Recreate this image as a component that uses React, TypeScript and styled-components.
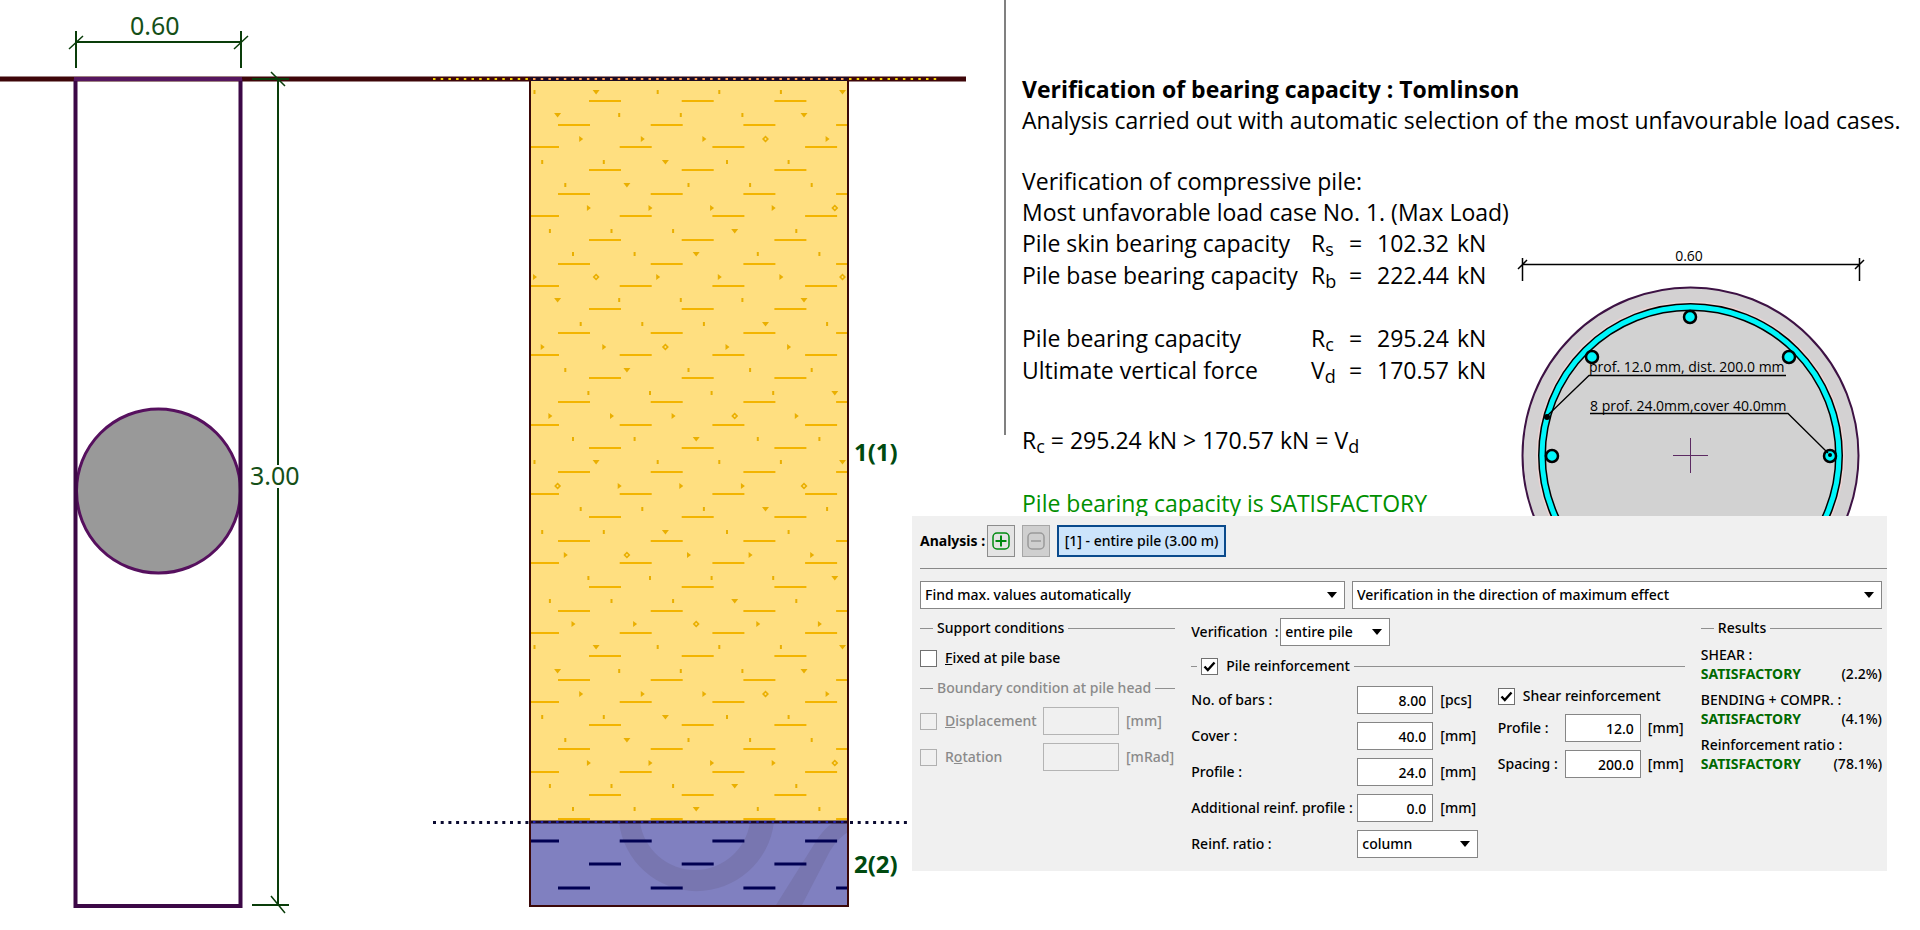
import React from "react";
import styled, { createGlobalStyle } from "styled-components";

const GlobalStyle = createGlobalStyle`
  *, *::before, *::after { box-sizing: border-box; }
  body { margin: 0; background: #fff; color: #000; font-family: "Open Sans", "Noto Sans", sans-serif; }
  h1, p { margin: 0; }
`;

const Page = styled.main`
  display: grid;
  grid-template-columns: 912fr 92fr 883fr 33fr;
  grid-template-rows: 516px auto;
  align-items: start;
`;

const ProfileDrawing = styled.svg`
  grid-column: 1 / 3;
  grid-row: 1 / 3;
  display: block;
  width: 100%;
  height: auto;
`;

/* ---------- Calculation report ---------- */

const Report = styled.section`
  grid-column: 3 / 5;
  grid-row: 1;
  height: 100%;
  display: flex;
  flex-direction: column;
  font-size: 23px;
  line-height: 31px;
  white-space: nowrap;
`;

const ReportIntro = styled.header`
  padding: 74px 0 0 16px;
  border-left: 2px solid #808080;
`;

const ReportTitle = styled.h1`
  font-size: 23px;
  font-weight: 700;
  line-height: 31px;
`;

const ReportBody = styled.div`
  display: flex;
  align-items: flex-start;
`;

const ReportDetails = styled.div`
  flex: 0 0 511px;
`;

const RuledBlock = styled.div`
  height: 299px;
  padding: 30px 0 0 16px;
  border-left: 2px solid #808080;
`;

const ValueTable = styled.table`
  border-collapse: collapse;
  table-layout: fixed;
  width: 490px;
  td { padding: 0; height: 32px; line-height: 31px; vertical-align: top; }
  tr.spaced td { height: 63px; padding-top: 31px; }
  sub { line-height: 0; font-size: 18px; vertical-align: -4px; }
`;

const Formula = styled.p`
  padding: 0 0 34px 18px;
  margin-top: -10px;
  sub { line-height: 0; font-size: 18px; vertical-align: -4px; }
`;

const Verdict = styled.p`
  padding-left: 18px;
  line-height: 26px;
  color: #008f00;
`;

const SectionDrawing = styled.svg`
  flex: none;
  margin-top: 104px;
`;

/* ---------- Analysis panel ---------- */

const Panel = styled.form`
  grid-column: 2 / 4;
  grid-row: 2;
  height: 355px;
  z-index: 1;
  background: #f0f0f0;
  padding: 9px 5px 0 8px;
  font-family: "Noto Sans", "Open Sans", sans-serif;
  font-size: 14px;
  line-height: 20px;
  font-weight: 500;
  white-space: nowrap;
`;

const Toolbar = styled.div`
  display: flex;
  align-items: center;
  gap: 7px;
  height: 32px;
`;

const ToolbarTitle = styled.strong`
  width: 60px;
  font-weight: 700;
`;

const IconButton = styled.button`
  width: 28px;
  height: 32px;
  padding: 0;
  display: grid;
  place-items: center;
  border: 1px solid #8c8c8c;
  background: #e4e4e4;
  color: #008a10;
  &:disabled { background: #cfcfcf; border-color: #a6a6a6; color: #9a9a9a; }
`;

const StageButton = styled.button`
  height: 32px;
  width: 169px;
  padding: 0;
  border: 2px solid #0a4a8c;
  background: #cce4fb;
  color: #000;
  font: inherit;
`;

const Divider = styled.hr`
  margin: 11px -5px 12px 0;
  border: 0;
  height: 1px;
  background: #888;
`;

const ModeRow = styled.div`
  display: grid;
  grid-template-columns: 425fr 530fr;
  gap: 7px;
`;

const Columns = styled.div`
  display: grid;
  grid-template-columns: 255fr 493fr 181fr;
  gap: 16px;
  padding-top: 9px;
`;

const Group = styled.div<{ $muted?: boolean }>`
  color: ${(p) => (p.$muted ? "#8a8a8a" : "#000")};
`;

const GroupTitle = styled.div<{ $lead?: number }>`
  display: flex;
  align-items: center;
  height: 20px;
  gap: 4px;
  &::before { content: ""; width: ${(p) => p.$lead ?? 13}px; height: 1px; background: #909090; }
  &::after { content: ""; flex: 1; height: 1px; background: #909090; }
`;

const FieldRows = styled.div`
  display: grid;
  gap: 8px;
`;

const FieldRow = styled.div<{ $label: number }>`
  display: grid;
  grid-template-columns: ${(p) => p.$label}px 76px auto;
  align-items: center;
  height: 28px;
  > span { padding-left: 7px; }
`;

const WideCell = styled.div`
  grid-column: 2 / 4;
`;

const CheckLabel = styled.label`
  display: flex;
  align-items: center;
  gap: 8px;
`;

const TickFrame = styled.span`
  position: relative;
  display: block;
  width: 17px;
  height: 17px;
  svg { position: absolute; inset: 0; pointer-events: none; display: none; }
  input:checked + svg { display: block; }
`;

const TickInput = styled.input`
  appearance: none;
  display: block;
  width: 17px;
  height: 17px;
  margin: 0;
  border: 1px solid #707070;
  background: #fff;
  &:disabled { border-color: #b0b0b0; background: #f0f0f0; }
`;

const NumberInput = styled.input`
  width: 76px;
  height: 28px;
  padding: 0 6px;
  border: 1px solid #868686;
  border-radius: 0;
  background: #fff;
  color: #000;
  font: inherit;
  text-align: right;
  &:disabled { border-color: #b4b4b4; background: #f0f0f0; }
`;

const SelectFrame = styled.span<{ $width?: number }>`
  position: relative;
  display: block;
  width: ${(p) => (p.$width ? `${p.$width}px` : "auto")};
  svg { position: absolute; right: 8px; top: 11px; pointer-events: none; }
`;

const SelectBox = styled.select`
  appearance: none;
  display: block;
  width: 100%;
  height: 28px;
  padding: 0 24px 0 4px;
  border: 1px solid #868686;
  border-radius: 0;
  background: #fff;
  color: #000;
  font: inherit;
`;

const Inline = styled.div`
  display: flex;
  align-items: center;
  height: 28px;
  label { width: 89px; }
`;

const Reinforcement = styled.div`
  display: flex;
  justify-content: space-between;
  padding-top: 10px;
`;

const ShearFields = styled.div`
  width: 187px;
  display: grid;
  align-content: start;
  gap: 8px;
`;

const Spacer = styled.div<{ $size: number }>`
  height: ${(p) => p.$size}px;
`;

const Result = styled.div`
  line-height: 19px;
  margin-bottom: 7px;
  div { display: flex; justify-content: space-between; }
  strong { color: #006a00; font-weight: 700; }
`;

function Tick(props: React.InputHTMLAttributes<HTMLInputElement>) {
  return (
    <TickFrame>
      <TickInput type="checkbox" {...props} />
      <svg width="17" height="17" viewBox="0 0 17 17">
        <path d="M3.5 8.5 L6.8 12 L13.5 4.5" fill="none" stroke="#000" strokeWidth="2.4" />
      </svg>
    </TickFrame>
  );
}

function Select({ id, label, value, width }: { id: string; label?: string; value: string; width?: number }) {
  return (
    <SelectFrame $width={width}>
      <SelectBox id={id} aria-label={label} defaultValue={value}>
        <option>{value}</option>
      </SelectBox>
      <svg width="10" height="6" viewBox="0 0 10 6">
        <path d="M0 0 H10 L5 6 Z" fill="#000" />
      </svg>
    </SelectFrame>
  );
}

function NumberField({ id, label, value, unit, labelWidth }: { id: string; label: string; value: string; unit: string; labelWidth: number }) {
  return (
    <FieldRow $label={labelWidth}>
      <label htmlFor={id}>{label}</label>
      <NumberInput id={id} defaultValue={value} />
      <span>{unit}</span>
    </FieldRow>
  );
}

/* ---------- Soil hatching ---------- */

const COLUMN = { left: 530, right: 848, top: 80, boundary: 822, bottom: 906 };
const ROW = 23.13;
const DASH_START = [589, 558, 527];
const ACCENTS = [[597, 843], [559, 805], [766], [667], [628], [836], [736], [697]];

function dashPath(from: number, to: number) {
  let d = "";
  for (let i = from; i < to; i++) {
    const y = Math.round(100.8 + ROW * i + (i % 3 === 1 ? 1 : 0));
    for (let k = -1; k < 4; k++) {
      const x0 = Math.max(DASH_START[i % 3] + k * 92.7, COLUMN.left + 1);
      const x1 = Math.min(DASH_START[i % 3] + k * 92.7 + 32, COLUMN.right - 1);
      if (x1 > x0) d += `M${x0} ${y}H${x1}`;
    }
  }
  return d;
}

function grainPath() {
  let d = "";
  for (let i = 0; i < 32; i++) {
    const y = Math.round(92.3 + ROW * i);
    const phase = (534.5 + 23.1 * i - 531) % 61.6;
    for (let x = 531 + phase; x < 846; x += 61.6) {
      const accent = ACCENTS[i % 8].some((a) => Math.abs(a - x) < 8);
      if (i % 3 === 2) {
        d += accent
          ? `M${x - 3.5} ${y}l3.5 -3.5l3.5 3.500l-3.5 3.500zM${x - 1.3} ${y}l1.3 1.300l1.3 -1.300l-1.3 -1.300z`
          : `M${x - 1.5} ${y - 3}v6l4 -3z`;
      } else {
        d += accent ? `M${x - 3.5} ${y - 2}h7l-3.5 4.500z` : `M${x - 1} ${y - 2}h2v4h-2z`;
      }
    }
  }
  return d;
}

function PileProfile() {
  return (
    <ProfileDrawing viewBox="0 0 1004 930" fontFamily='"Noto Sans", sans-serif' role="img" aria-label="Pile and soil profile">
      <path d="M0 79H966" stroke="#3e0609" strokeWidth="5" />

      {/* soil layers */}
      <rect x={COLUMN.left} y={COLUMN.top} width={318} height={742} fill="#ffdf80" />
      <rect x={COLUMN.left} y={COLUMN.boundary} width={318} height={84} fill="#8080c0" />
      <g fill="#7876b0">
        <path d="M619 822A78 78 0 0 0 774 822H750A55.500 55.500 0 0 1 640 822Z" />
        <path d="M776 905L818 838Q826 827 834 822H848V832Q838 838 830 851L802 905Z" />
      </g>
      <path d={dashPath(0, 32)} stroke="#f3b400" strokeWidth="2" />
      <path d={grainPath()} fill="#eaaf00" fillRule="evenodd" />
      <path d={dashPath(32, 35)} stroke="#000052" strokeWidth="3" />
      <path d="M530 79H848" stroke="#1c0a24" strokeWidth="4" />
      <path d="M530 822H848" stroke="#180828" strokeWidth="3" />
      <path d="M530 79V906H848V79" fill="none" stroke="#3a0808" strokeWidth="2" />
      <path d="M433 79H530M849 79H937" stroke="#f5d400" strokeWidth="2" strokeDasharray="2.500 5.200" />
      <path d="M533 79H848" stroke="#ff9c50" strokeWidth="2" strokeDasharray="2.500 5.200" />
      <path d="M433 822.500H530M850 822.500H910" stroke="#0a0a30" strokeWidth="3" strokeDasharray="3 4.700" />
      <path d="M533 822H848" stroke="#2020b0" strokeWidth="2" strokeDasharray="2.500 5.200" />

      {/* pile */}
      <circle cx="158.500" cy="491" r="82" fill="#999" stroke="#56105e" strokeWidth="3" />
      <path d="M75.500 79V906H240.500V79" fill="none" stroke="#3c0846" strokeWidth="4" />
      <path d="M74 79H242" stroke="#56165e" strokeWidth="4" />

      {/* dimensions */}
      <g stroke="#0a3d0a" strokeWidth="2" fill="none">
        <path d="M76 31V68M241 31V68M76 42H241M278 79V465M278 488V906M252 79H289M252 905H289" />
        <path d="M69 49L83 36M234 49L248 36M271 72L285 86M271 896L285 913" strokeWidth="1.500" />
      </g>
      <g fill="#155018" fontSize="25">
        <text x="130" y="35">0.60</text>
        <text x="250" y="485">3.00</text>
      </g>
      <g fill="#004a10" fontSize="24" fontWeight="700">
        <text x="854" y="461">1(1)</text>
        <text x="854" y="873">2(2)</text>
      </g>
    </ProfileDrawing>
  );
}

function PileSection() {
  const bars = [[175, 77], [77, 117], [274, 117], [37, 216], [315, 216]];
  return (
    <SectionDrawing width="356" height="276" viewBox="0 0 356 276" role="img" aria-label="Pile cross-section">
      <circle cx="175.500" cy="215.500" r="168" fill="#d3d1d2" stroke="#3d1244" strokeWidth="2" />
      <circle cx="175.500" cy="215.500" r="148.500" fill="none" stroke="#efd3d3" strokeWidth="11" />
      <circle cx="175.500" cy="215.500" r="148.500" fill="#d2d2d2" stroke="#000" strokeWidth="8" />
      <circle cx="175.500" cy="215.500" r="148.500" fill="none" stroke="#00f6fa" strokeWidth="5" />
      {bars.map(([x, y]) => (
        <circle key={`${x}-${y}`} cx={x} cy={y} r="6" fill="#00f6fa" stroke="#000" strokeWidth="2.500" />
      ))}
      <g stroke="#000" fill="none">
        <path d="M8 24.500H345M7.500 18V41M344.500 18V41M3 29L12 20M340 29L349 20" strokeWidth="1.500" />
        <path d="M271 135.500H74L33 175M75 173.500H273L313 213" strokeWidth="1.300" />
      </g>
      <circle cx="32" cy="177" r="3" />
      <circle cx="315" cy="215" r="2" />
      <path d="M158 215.500H193M175.500 198V233" stroke="#5c2a62" />
      <g fontSize="14">
        <text x="174" y="21" textAnchor="middle">0.60</text>
        <text x="74" y="132">prof. 12.0 mm, dist. 200.0 mm</text>
        <text x="75" y="171">8 prof. 24.0mm,cover 40.0mm</text>
      </g>
    </SectionDrawing>
  );
}

const capacities = [
  { name: "Pile skin bearing capacity", symbol: "R", index: "s", value: "102.32" },
  { name: "Pile base bearing capacity", symbol: "R", index: "b", value: "222.44" },
  { name: "Pile bearing capacity", symbol: "R", index: "c", value: "295.24", spaced: true },
  { name: "Ultimate vertical force", symbol: "V", index: "d", value: "170.57" },
];

const results = [
  { name: "SHEAR :", use: "(2.2%)" },
  { name: "BENDING + COMPR. :", use: "(4.1%)" },
  { name: "Reinforcement ratio :", use: "(78.1%)" },
];

export default function App() {
  return (
    <>
      <GlobalStyle />
      <Page>
        <PileProfile />

        <Report>
          <ReportIntro>
            <ReportTitle>Verification of bearing capacity : Tomlinson</ReportTitle>
            <p>Analysis carried out with automatic selection of the most unfavourable load cases.</p>
          </ReportIntro>
          <ReportBody>
            <ReportDetails>
              <RuledBlock>
                <p>Verification of compressive pile:</p>
                <p>Most unfavorable load case No. 1. (Max Load)</p>
                <ValueTable>
                  <colgroup>
                    <col width="289" />
                    <col width="38" />
                    <col width="28" />
                    <col width="80" />
                    <col />
                  </colgroup>
                  <tbody>
                    {capacities.map((c) => (
                      <tr key={c.name} className={c.spaced ? "spaced" : undefined}>
                        <td>{c.name}</td>
                        <td>{c.symbol}<sub>{c.index}</sub></td>
                        <td>=</td>
                        <td>{c.value}</td>
                        <td>kN</td>
                      </tr>
                    ))}
                  </tbody>
                </ValueTable>
              </RuledBlock>
              <Formula>R<sub>c</sub> = 295.24 kN &gt; 170.57 kN = V<sub>d</sub></Formula>
              <Verdict>Pile bearing capacity is SATISFACTORY</Verdict>
            </ReportDetails>
            <PileSection />
          </ReportBody>
        </Report>

        <Panel>
          <Toolbar>
            <ToolbarTitle>Analysis :</ToolbarTitle>
            <IconButton type="button" aria-label="Add analysis">
              <svg width="18" height="18" viewBox="0 0 18 18" fill="none" stroke="currentColor" strokeWidth="1.500">
                <rect x="1" y="1" width="16" height="16" rx="4" />
                <path d="M3.500 9H14.500M9 3.500V14.500" strokeWidth="2" />
              </svg>
            </IconButton>
            <IconButton type="button" aria-label="Remove analysis" disabled>
              <svg width="18" height="18" viewBox="0 0 18 18" fill="none" stroke="currentColor" strokeWidth="1.500">
                <rect x="1" y="1" width="16" height="16" rx="4" />
                <path d="M4 9H14" />
              </svg>
            </IconButton>
            <StageButton type="button">[1] - entire pile (3.00 m)</StageButton>
          </Toolbar>
          <Divider />
          <ModeRow>
            <Select id="load-mode" label="Load selection" value="Find max. values automatically" />
            <Select id="direction" label="Verification direction" value="Verification in the direction of maximum effect" />
          </ModeRow>

          <Columns>
            <div>
              <GroupTitle>Support conditions</GroupTitle>
              <Spacer $size={10} />
              <CheckLabel>
                <Tick />
                <span><u>F</u>ixed at pile base</span>
              </CheckLabel>
              <Spacer $size={10} />
              <Group $muted>
                <GroupTitle>Boundary condition at pile head</GroupTitle>
                <Spacer $size={9} />
                <FieldRows>
                  <FieldRow $label={123}>
                    <CheckLabel><Tick disabled /><span><u>D</u>isplacement</span></CheckLabel>
                    <NumberInput aria-label="Displacement value" disabled />
                    <span>[mm]</span>
                  </FieldRow>
                  <FieldRow $label={123}>
                    <CheckLabel><Tick disabled /><span>R<u>o</u>tation</span></CheckLabel>
                    <NumberInput aria-label="Rotation value" disabled />
                    <span>[mRad]</span>
                  </FieldRow>
                </FieldRows>
              </Group>
            </div>

            <div>
              <Inline>
                <label htmlFor="scope">Verification&nbsp; :</label>
                <Select id="scope" value="entire pile" width={110} />
              </Inline>
              <Spacer $size={10} />
              <GroupTitle $lead={6}>
                <CheckLabel><Tick defaultChecked />Pile reinforcement</CheckLabel>
              </GroupTitle>
              <Reinforcement>
                <FieldRows>
                  <NumberField id="bars" label="No. of bars :" value="8.00" unit="[pcs]" labelWidth={166} />
                  <NumberField id="cover" label="Cover :" value="40.0" unit="[mm]" labelWidth={166} />
                  <NumberField id="profile" label="Profile :" value="24.0" unit="[mm]" labelWidth={166} />
                  <NumberField id="additional" label="Additional reinf. profile :" value="0.0" unit="[mm]" labelWidth={166} />
                  <FieldRow $label={166}>
                    <label htmlFor="ratio">Reinf. ratio :</label>
                    <WideCell>
                      <Select id="ratio" value="column" width={121} />
                    </WideCell>
                  </FieldRow>
                </FieldRows>
                <ShearFields>
                  <CheckLabel><Tick defaultChecked />Shear reinforcement</CheckLabel>
                  <NumberField id="shear-profile" label="Profile :" value="12.0" unit="[mm]" labelWidth={67} />
                  <NumberField id="shear-spacing" label="Spacing :" value="200.0" unit="[mm]" labelWidth={67} />
                </ShearFields>
              </Reinforcement>
            </div>

            <div>
              <GroupTitle>Results</GroupTitle>
              <Spacer $size={7} />
              {results.map((r) => (
                <Result key={r.name}>
                  {r.name}
                  <div><strong>SATISFACTORY</strong><span>{r.use}</span></div>
                </Result>
              ))}
            </div>
          </Columns>
        </Panel>
      </Page>
    </>
  );
}
